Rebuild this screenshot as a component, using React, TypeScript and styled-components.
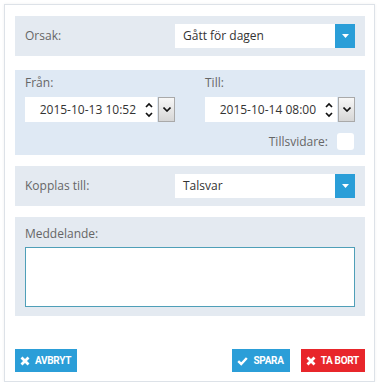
import styled, { createGlobalStyle } from "styled-components";

const GlobalStyle = createGlobalStyle`
  body {
    margin: 0;
    background: #fff;
    font-family: "Open Sans", "Liberation Sans", Arial, sans-serif;
  }
`;

const Card = styled.div`
  box-sizing: border-box;
  margin: 4px 0 0 4px;
  width: 371px;
  height: 378px;
  border: 1px solid #dde2e8;
  box-shadow: 0 0 3px rgba(0, 0, 0, 0.06);
  padding: 11px 9px 0 10px;
  display: flex;
  flex-direction: column;
`;

const Section = styled.div<{ $tone?: "blue" | "gray"; $gap?: number }>`
  background: ${({ $tone }) => ($tone === "blue" ? "#dfe9f4" : "#e4eaf1")};
  margin-bottom: ${({ $gap }) => $gap ?? 11}px;
  padding: 0 10px;
`;

const InlineRow = styled.div`
  display: grid;
  grid-template-columns: 1fr 180px;
  align-items: center;
  height: 40px;
`;

const Label = styled.label`
  display: block;
  font-size: 12px;
  line-height: 16px;
  color: #666;
`;

const Select = styled.div`
  display: flex;
  height: 24px;
  background: #fff;
`;

const SelectValue = styled.span`
  flex: 1;
  padding-left: 8px;
  font-size: 12px;
  line-height: 24px;
  color: #333;
`;

const SelectButton = styled.span`
  width: 20px;
  background: #2a9ed8;
  display: flex;
  align-items: center;
  justify-content: center;
`;

const DateSection = styled(Section)`
  padding: 5px 10px 5px;
`;

const DateGrid = styled.div`
  display: grid;
  grid-template-columns: 150px 150px;
  column-gap: 30px;
`;

const FieldLabel = styled(Label)`
  margin-bottom: 6px;
`;

const DateField = styled.div`
  display: flex;
  height: 25px;
`;

const DateInput = styled.div`
  width: 132px;
  background: #fff;
  display: flex;
  align-items: center;
  justify-content: flex-end;
  padding-right: 4px;
  box-sizing: border-box;
  font-size: 12px;
  color: #333;
`;

const Spin = styled.svg`
  margin-left: 9px;
`;

const NativeButton = styled.span`
  box-sizing: border-box;
  width: 17px;
  margin-left: 1px;
  border: 1px solid #a9a9a9;
  background: linear-gradient(#f7f7f7, #d6d6d6);
  display: flex;
  align-items: center;
  justify-content: center;
`;

const CheckRow = styled.div`
  display: flex;
  justify-content: flex-end;
  align-items: center;
  gap: 9px;
  margin-top: 11px;
  padding-right: 1px;
`;

const Checkbox = styled.span`
  width: 17px;
  height: 17px;
  background: #fff;
  border-radius: 3px;
`;

const MessageSection = styled(Section)`
  padding: 8px 10px 9px;
`;

const MessageLabel = styled(Label)`
  line-height: 17px;
  margin-bottom: 5px;
`;

const TextArea = styled.textarea`
  display: block;
  box-sizing: border-box;
  width: 100%;
  height: 60px;
  margin: 0;
  border: 1px solid #4f9fb8;
  background: #fff;
  resize: none;
  outline: none;
  font-family: inherit;
`;

const ButtonRow = styled.div`
  margin-top: auto;
  padding-bottom: 9px;
  display: flex;
  justify-content: space-between;
`;

const ButtonGroup = styled.div`
  display: flex;
  gap: 11px;
`;

const Button = styled.button<{ $variant?: "blue" | "red" }>`
  height: 23px;
  border: none;
  padding: 0 6px 0 5px;
  display: flex;
  align-items: center;
  gap: 5px;
  background: ${({ $variant }) => ($variant === "red" ? "#e8262b" : "#2b9ed8")};
  color: #fff;
  font-family: Roboto, "Open Sans", sans-serif;
  font-weight: 700;
  font-size: 10px;
  letter-spacing: -0.3px;
  text-transform: uppercase;
  cursor: pointer;
`;

const Caret = () => (
  <svg width="7" height="4" viewBox="0 0 7 4">
    <path d="M0 0 H7 L3.5 4 Z" fill="#fff" />
  </svg>
);

const SpinArrows = () => (
  <Spin width="8" height="18" viewBox="0 0 8 18">
    <path d="M1 6 L4 3 L7 6" fill="none" stroke="#111" strokeWidth="1.7" />
    <path d="M1 12 L4 15 L7 12" fill="none" stroke="#111" strokeWidth="1.7" />
  </Spin>
);

const SmallCaret = () => (
  <svg width="8" height="5" viewBox="0 0 8 5">
    <path d="M0.5 0.5 L4 4 L7.5 0.5" fill="none" stroke="#111" strokeWidth="1.6" />
  </svg>
);

const CrossIcon = () => (
  <svg width="10" height="10" viewBox="0 0 10 10">
    <path d="M1.5 1.5 L8.5 8.5 M8.5 1.5 L1.5 8.5" stroke="#fff" strokeWidth="2.8" />
  </svg>
);

const CheckIcon = () => (
  <svg width="11" height="10" viewBox="0 0 11 10">
    <path d="M1.2 5.2 L4.2 8 L9.8 2" fill="none" stroke="#fff" strokeWidth="2.4" />
  </svg>
);

function DatePicker({ value }: { value: string }) {
  return (
    <DateField>
      <DateInput>
        {value}
        <SpinArrows />
      </DateInput>
      <NativeButton>
        <SmallCaret />
      </NativeButton>
    </DateField>
  );
}

export default function App() {
  return (
    <>
      <GlobalStyle />
      <Card>
        <Section $gap={14}>
          <InlineRow>
            <Label>Orsak:</Label>
            <Select>
              <SelectValue>Gått för dagen</SelectValue>
              <SelectButton>
                <Caret />
              </SelectButton>
            </Select>
          </InlineRow>
        </Section>

        <DateSection $tone="blue">
          <DateGrid>
            <div>
              <FieldLabel>Från:</FieldLabel>
              <DatePicker value="2015-10-13 10:52" />
            </div>
            <div>
              <FieldLabel>Till:</FieldLabel>
              <DatePicker value="2015-10-14 08:00" />
            </div>
          </DateGrid>
          <CheckRow>
            <Label>Tillsvidare:</Label>
            <Checkbox />
          </CheckRow>
        </DateSection>

        <Section>
          <InlineRow>
            <Label>Kopplas till:</Label>
            <Select>
              <SelectValue>Talsvar</SelectValue>
              <SelectButton>
                <Caret />
              </SelectButton>
            </Select>
          </InlineRow>
        </Section>

        <MessageSection>
          <MessageLabel>Meddelande:</MessageLabel>
          <TextArea />
        </MessageSection>

        <ButtonRow>
          <Button>
            <CrossIcon />
            Avbryt
          </Button>
          <ButtonGroup>
            <Button>
              <CheckIcon />
              Spara
            </Button>
            <Button $variant="red">
              <CrossIcon />
              Ta bort
            </Button>
          </ButtonGroup>
        </ButtonRow>
      </Card>
    </>
  );
}
